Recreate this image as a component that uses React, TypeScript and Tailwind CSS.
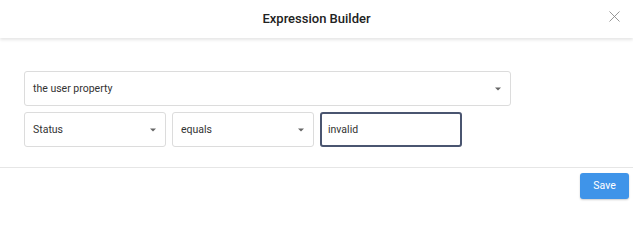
import { X } from "lucide-react";

const Caret = () => (
  <svg width="6" height="4" viewBox="0 0 6 4" className="shrink-0">
    <path d="M0 0.5 L6 0.5 L3 3.5 Z" fill="#666" />
  </svg>
);

const SelectBox = ({ label, className }: { label: string; className: string }) => (
  <div
    className={`h-[35px] flex items-center justify-between pl-[8px] pr-[9px] border border-[#dcdcdc] rounded-[3px] bg-white text-[10.5px] text-[#333] ${className}`}
  >
    <span>{label}</span>
    <Caret />
  </div>
);

export default function App() {
  return (
    <div className="w-[633px] h-[203px] bg-white flex flex-col font-['Roboto',sans-serif]">
      <div className="relative h-[38px] shrink-0 flex items-center justify-center shadow-[0_2px_3px_rgba(0,0,0,0.1)] z-10">
        <span className="text-[13px] font-medium text-[#222]">Expression Builder</span>
        <button className="absolute right-[9px] top-[7px] text-[#888]">
          <X size={19} strokeWidth={1.1} />
        </button>
      </div>

      <div className="px-6 pt-[33px] pb-[20px] flex flex-col gap-[6px]">
        <SelectBox label="the user property" className="w-[487px]" />
        <div className="flex gap-[6px]">
          <SelectBox label="Status" className="w-[142px]" />
          <SelectBox label="equals" className="w-[142px]" />
          <div className="w-[142px] h-[35px] flex items-center px-[6px] border-2 border-[#4a5570] rounded-[3px] text-[10.5px] text-[#333]">
            invalid
          </div>
        </div>
      </div>

      <div className="border-t border-[#e6e6e6] flex justify-end pt-[5px] pr-[4px]">
        <button className="w-[49px] h-[26px] rounded-[3px] bg-[#3f94e9] text-white text-[10.5px] shadow-[0_1px_2px_rgba(0,0,0,0.2)]">
          Save
        </button>
      </div>
    </div>
  );
}
